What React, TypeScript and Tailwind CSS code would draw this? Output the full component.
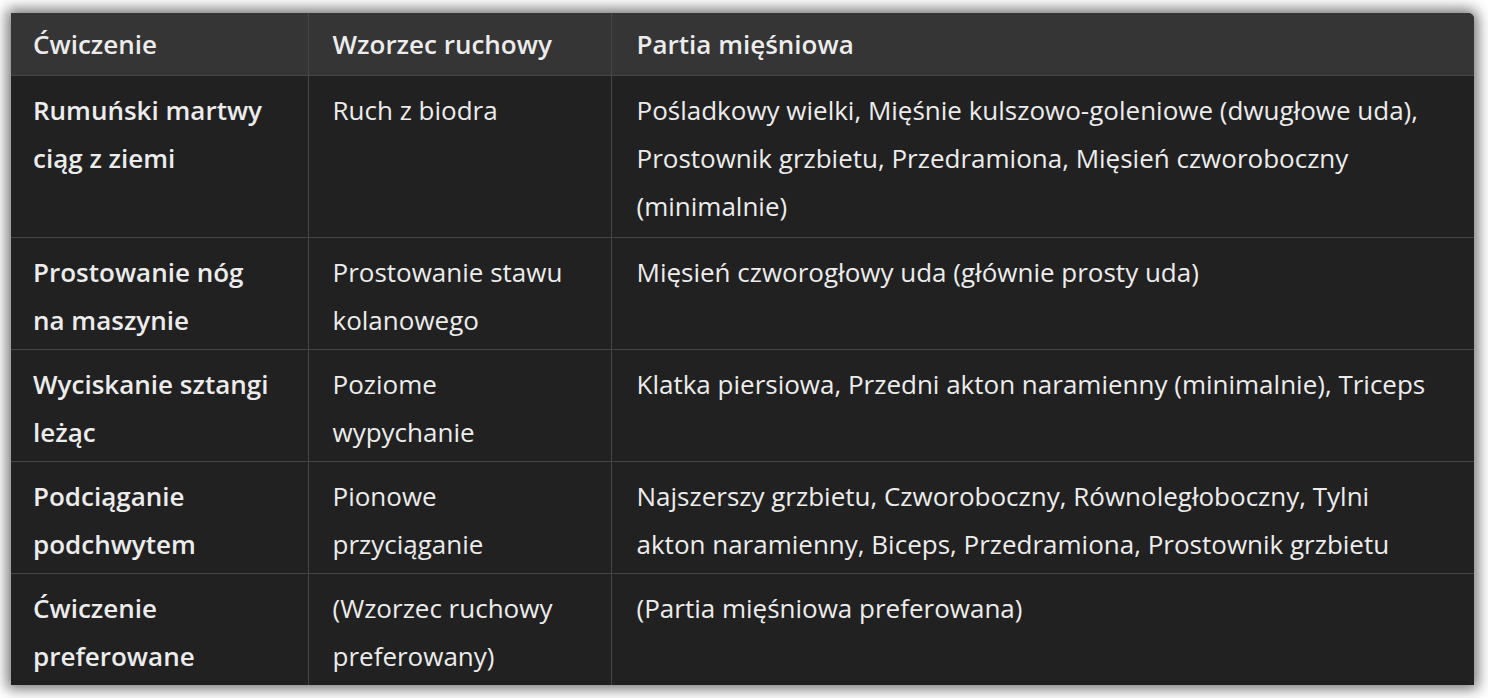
const rows = [
  {
    ex: ["Rumuński martwy", "ciąg z ziemi"],
    wz: ["Ruch z biodra"],
    pm: [
      "Pośladkowy wielki, Mięśnie kulszowo-goleniowe (dwugłowe uda),",
      "Prostownik grzbietu, Przedramiona, Mięsień czworoboczny",
      "(minimalnie)",
    ],
  },
  {
    ex: ["Prostowanie nóg", "na maszynie"],
    wz: ["Prostowanie stawu", "kolanowego"],
    pm: ["Mięsień czworogłowy uda (głównie prosty uda)"],
  },
  {
    ex: ["Wyciskanie sztangi", "leżąc"],
    wz: ["Poziome", "wypychanie"],
    pm: ["Klatka piersiowa, Przedni akton naramienny (minimalnie), Triceps"],
  },
  {
    ex: ["Podciąganie", "podchwytem"],
    wz: ["Pionowe", "przyciąganie"],
    pm: [
      "Najszerszy grzbietu, Czworoboczny, Równoległoboczny, Tylni",
      "akton naramienny, Biceps, Przedramiona, Prostownik grzbietu",
    ],
  },
  {
    ex: ["Ćwiczenie", "preferowane"],
    wz: ["(Wzorzec ruchowy", "preferowany)"],
    pm: ["(Partia mięśniowa preferowana)"],
  },
];

function Lines({ items }: { items: string[] }) {
  return (
    <>
      {items.map((t, i) => (
        <div key={i} className="whitespace-nowrap">
          {t}
        </div>
      ))}
    </>
  );
}

export default function App() {
  return (
    <div className="min-h-screen bg-white pl-[11px] pr-[14px] pt-[13px] pb-[13px] font-['Open_Sans',sans-serif]">
      <div className="rounded-tr-md overflow-hidden bg-[#212121] shadow-[0_0_14px_4px_rgba(0,0,0,0.55)] text-[#ececec] text-[26px] leading-[48px]">
        <table className="w-full border-collapse table-fixed">
          <thead>
            <tr className="bg-[#353535] text-left">
              <th className="w-[297px] px-[22px] pt-[7px] pb-[7px] font-semibold">Ćwiczenie</th>
              <th className="w-[303px] px-[24px] pt-[7px] pb-[7px] font-semibold border-l border-[#464646]">Wzorzec ruchowy</th>
              <th className="px-[25px] pt-[7px] pb-[7px] font-semibold border-l border-[#464646]">Partia mięśniowa</th>
            </tr>
          </thead>
          <tbody>
            {rows.map((r, i) => {
              const pad = i === 0 ? "pt-[10px] pb-[7px]" : "pt-[10px] pb-[5px]";
              return (
                <tr key={i} className="border-t border-[#464646] align-top">
                  <td className={`px-[22px] font-semibold ${pad}`}>
                    <Lines items={r.ex} />
                  </td>
                  <td className={`px-[24px] border-l border-[#464646] ${pad}`}>
                    <Lines items={r.wz} />
                  </td>
                  <td className={`px-[25px] border-l border-[#464646] ${pad}`}>
                    <Lines items={r.pm} />
                  </td>
                </tr>
              );
            })}
          </tbody>
        </table>
      </div>
    </div>
  );
}
